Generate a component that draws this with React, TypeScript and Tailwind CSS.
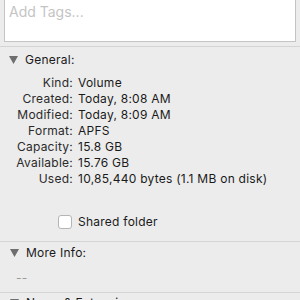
import React from "react";

const rows: [string, string][] = [
  ["Kind:", "Volume"],
  ["Created:", "Today, 8:08 AM"],
  ["Modified:", "Today, 8:09 AM"],
  ["Format:", "APFS"],
  ["Capacity:", "15.8 GB"],
  ["Available:", "15.76 GB"],
  ["Used:", "10,85,440 bytes (1.1 MB on disk)"],
];

function Tri() {
  return (
    <svg width="9" height="8" viewBox="0 0 9 8" className="shrink-0">
      <path d="M0 0 L9 0 L4.5 8 Z" fill="#6e6e6e" />
    </svg>
  );
}

export default function App() {
  return (
    <div
      className="w-[300px] h-[300px] overflow-hidden bg-[#ececec] text-[#1a1a1a] tracking-[0.25px]"
      style={{ fontFamily: "Inter, 'Liberation Sans', sans-serif" }}
    >
      <div className="px-[4px] pt-0">
        <div className="h-[42px] bg-white border-x border-b border-[#c4c4c4] px-[4px] pt-[2px] text-[14px] tracking-normal text-[#c4c4c4] leading-[20px]">
          Add Tags...
        </div>
      </div>
      <div className="mt-[4px] border-t border-[#d4d4d4]" />
      <div className="flex items-center gap-[7px] pl-[9px] h-[24px] mt-[1px] text-[12px]">
        <Tri />
        <span>General:</span>
      </div>
      <div className="flex flex-col mt-[3px] text-[12px] leading-[16px]">
        {rows.map(([k, v]) => (
          <div key={k} className="flex">
            <div className="w-[73px] text-right shrink-0 text-[#2a2a2a]">{k}</div>
            <div className="pl-[5px] whitespace-nowrap">{v}</div>
          </div>
        ))}
      </div>
      <div className="flex items-center gap-[6px] pl-[58px] mt-[27px] h-[16px] text-[12px]">
        <div className="w-[14px] h-[14px] rounded-[3px] bg-white border border-[#b5b5b5]" />
        <span>Shared folder</span>
      </div>
      <div className="mt-[11px] border-t border-[#d4d4d4]" />
      <div className="flex items-center gap-[7px] pl-[10px] h-[22px] text-[12px]">
        <Tri />
        <span>More Info:</span>
      </div>
      <div className="pl-[16px] mt-[8px] text-[12px] text-[#9a9a9a] leading-[12px]">--</div>
      <div className="mt-[8px] border-t border-[#d4d4d4]" />
      <div className="flex items-center gap-[7px] pl-[10px] h-[20px] text-[12px]">
        <Tri />
        <span>Name &amp; Extension:</span>
      </div>
    </div>
  );
}
